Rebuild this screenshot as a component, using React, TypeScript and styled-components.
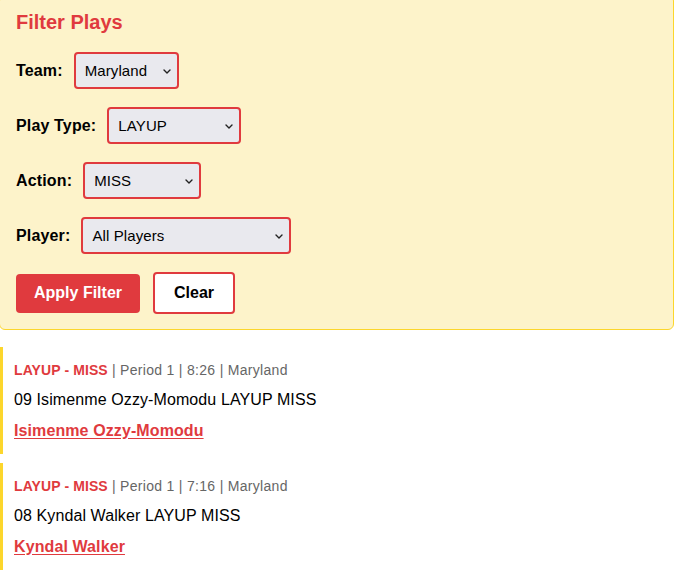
import React from "react";
import styled, { createGlobalStyle } from "styled-components";

const GlobalStyle = createGlobalStyle`
  html, body { margin: 0; padding: 0; background: #ffffff; }
  body { font-family: "Liberation Sans", Arial, Helvetica, sans-serif; color: #000; overflow: hidden; }
`;

const RED = "#e03a3e";
const GOLD = "#fcd62c";

const Page = styled.div`
  width: 674px;
  display: flex;
  flex-direction: column;
`;

const Panel = styled.section`
  margin: -5px 0 0 -1px;
  padding: 15px 15px 15px 16px;
  background: #fdf3ca;
  border: 1px solid ${GOLD};
  border-radius: 6px;
  display: flex;
  flex-direction: column;
  gap: 18px;
`;

const Title = styled.h3`
  margin: 0;
  font-size: 20px;
  line-height: 23px;
  font-weight: 700;
  color: ${RED};
`;

const FieldRow = styled.div`
  display: flex;
  align-items: center;
  gap: 11px;
`;

const Label = styled.label`
  font-size: 16px;
  font-weight: 700;
  line-height: 19px;
  letter-spacing: 0.15px;
`;

const SelectWrap = styled.div<{ $w: number }>`
  position: relative;
  width: ${(p) => p.$w}px;
  height: 37px;
`;

const Select = styled.select`
  appearance: none;
  -webkit-appearance: none;
  box-sizing: border-box;
  width: 100%;
  height: 100%;
  margin: 0;
  padding: 0 24px 0 9px;
  border: 2px solid ${RED};
  border-radius: 4px;
  background: #e9e9ee;
  color: #000;
  font-family: "Liberation Sans", Arial, sans-serif;
  font-size: 15px;
  letter-spacing: 0.1px;
  outline: none;
`;

const Chevron = styled.svg`
  position: absolute;
  right: 8px;
  top: 50%;
  margin-top: -2px;
  width: 8px;
  height: 5px;
  pointer-events: none;
`;

const ButtonRow = styled.div`
  display: flex;
  align-items: center;
  gap: 13px;
`;

const Button = styled.button<{ $primary?: boolean }>`
  box-sizing: border-box;
  margin: 0;
  height: ${(p) => (p.$primary ? 39 : 42)}px;
  padding: 0 ${(p) => (p.$primary ? 18 : 19)}px;
  border: ${(p) => (p.$primary ? "none" : `2px solid ${RED}`)};
  border-radius: 4px;
  background: ${(p) => (p.$primary ? RED : "#ffffff")};
  color: ${(p) => (p.$primary ? "#ffffff" : "#000000")};
  font-family: "Liberation Sans", Arial, sans-serif;
  font-size: 16px;
  font-weight: 700;
  cursor: pointer;
`;

const PlayList = styled.div`
  margin-top: 17px;
  display: flex;
  flex-direction: column;
  gap: 9px;
`;

const PlayItem = styled.article`
  height: 107px;
  box-sizing: border-box;
  padding: 15px 0 0 11px;
  border-left: 3px solid ${GOLD};
  display: flex;
  flex-direction: column;
`;

const Meta = styled.div`
  font-size: 14px;
  line-height: 16px;
  color: #666666;
  letter-spacing: 0.3px;
`;

const Tag = styled.span`
  color: ${RED};
  font-weight: 700;
  letter-spacing: 0.1px;
`;

const Description = styled.div`
  margin-top: 12px;
  font-size: 16px;
  line-height: 19px;
  color: #000;
  letter-spacing: 0.1px;
`;

const PlayerLink = styled.a`
  margin-top: 12px;
  align-self: flex-start;
  font-size: 16px;
  line-height: 19px;
  font-weight: 700;
  color: ${RED};
  letter-spacing: 0.1px;
  text-decoration: underline;
  text-underline-offset: 2px;
`;

type Field = { label: string; value: string; width: number };

const fields: Field[] = [
  { label: "Team:", value: "Maryland", width: 105 },
  { label: "Play Type:", value: "LAYUP", width: 134 },
  { label: "Action:", value: "MISS", width: 118 },
  { label: "Player:", value: "All Players", width: 210 },
];

const plays = [
  {
    period: 1,
    clock: "8:26",
    team: "Maryland",
    text: "09 Isimenme Ozzy-Momodu LAYUP MISS",
    player: "Isimenme Ozzy-Momodu",
  },
  {
    period: 1,
    clock: "7:16",
    team: "Maryland",
    text: "08 Kyndal Walker LAYUP MISS",
    player: "Kyndal Walker",
  },
];

export default function App() {
  return (
    <>
      <GlobalStyle />
      <Page>
        <Panel>
          <Title>Filter Plays</Title>
          {fields.map((f) => (
            <FieldRow key={f.label}>
              <Label>{f.label}</Label>
              <SelectWrap $w={f.width}>
                <Select defaultValue={f.value}>
                  <option value={f.value}>{f.value}</option>
                </Select>
                <Chevron viewBox="0 0 8 5" fill="none">
                  <path d="M1 1 L4 4 L7 1" stroke="#222" strokeWidth="1.4" strokeLinecap="round" strokeLinejoin="round" />
                </Chevron>
              </SelectWrap>
            </FieldRow>
          ))}
          <ButtonRow>
            <Button $primary>Apply Filter</Button>
            <Button>Clear</Button>
          </ButtonRow>
        </Panel>
        <PlayList>
          {plays.map((p) => (
            <PlayItem key={p.clock}>
              <Meta>
                <Tag>LAYUP - MISS</Tag> | Period {p.period} | {p.clock} | {p.team}
              </Meta>
              <Description>{p.text}</Description>
              <PlayerLink href="#">{p.player}</PlayerLink>
            </PlayItem>
          ))}
        </PlayList>
      </Page>
    </>
  );
}
